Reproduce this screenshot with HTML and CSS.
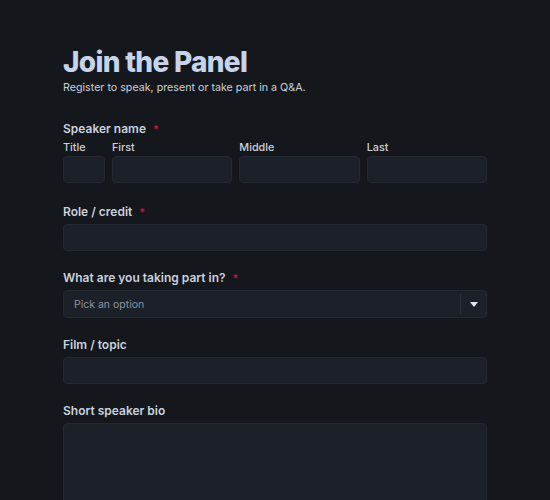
FILE: index.html
```html
<!DOCTYPE html>
<html lang="en">
<head>
<meta charset="utf-8">
<title>Join the Panel</title>
<link rel="stylesheet" href="styles.css">
</head>
<body>
<main class="page">
  <h1 class="title">Join the Panel</h1>
  <p class="subtitle">Register to speak, present or take part in a Q&amp;A.</p>

  <form class="form">
    <div class="field field-name">
      <div class="label">Speaker name <span class="req">*</span></div>
      <div class="name-grid">
        <label class="sub"><span class="sub-label">Title</span><input class="input" type="text"></label>
        <label class="sub"><span class="sub-label">First</span><input class="input" type="text"></label>
        <label class="sub"><span class="sub-label">Middle</span><input class="input" type="text"></label>
        <label class="sub"><span class="sub-label">Last</span><input class="input" type="text"></label>
      </div>
    </div>

    <div class="field">
      <label class="label">Role / credit <span class="req">*</span></label>
      <input class="input" type="text">
    </div>

    <div class="field">
      <label class="label">What are you taking part in? <span class="req">*</span></label>
      <div class="select">
        <span class="placeholder">Pick an option</span>
        <span class="select-btn"><span class="caret"></span></span>
      </div>
    </div>

    <div class="field">
      <label class="label">Film / topic</label>
      <input class="input" type="text">
    </div>

    <div class="field">
      <label class="label">Short speaker bio</label>
      <textarea class="input textarea"></textarea>
    </div>
  </form>
</main>
</body>
</html>
```

FILE: styles.css
```css
* { box-sizing: border-box; }
html, body {
  margin: 0;
  background: #14171c;
  font-family: Inter, "Noto Sans", sans-serif;
  color: #c9d1dc;
}
.page {
  width: 424px;
  margin: 0 auto;
  padding-top: 45px;
}
.title {
  margin: 0;
  font-size: 28px;
  line-height: 34px;
  font-weight: 800;
  letter-spacing: -0.025em;
  color: #c5d4ea;
}
.subtitle {
  margin: 1px 0 0;
  font-size: 10.7px;
  line-height: 16px;
  color: #c8d0db;
}
.form {
  margin-top: 25px;
  display: flex;
  flex-direction: column;
  gap: 19px;
}
.field {
  display: flex;
  flex-direction: column;
}
.field-name {
  margin-bottom: 2px;
}
.label {
  display: block;
  font-size: 12px;
  line-height: 16px;
  font-weight: 600;
  color: #c9d1dc;
  margin-bottom: 4px;
}
.req {
  color: #c0154d;
  font-size: 11px;
  margin-left: 4px;
}
.name-grid {
  display: grid;
  grid-template-columns: 42px 1fr 1fr 1fr;
  column-gap: 7px;
}
.sub {
  display: flex;
  flex-direction: column;
}
.sub-label {
  font-size: 10.8px;
  line-height: 13px;
  font-weight: 500;
  color: #c9d1dc;
  margin-bottom: 2px;
}
.input {
  display: block;
  width: 100%;
  height: 27px;
  margin: 0;
  background: #1b2029;
  border: 1px solid #232932;
  border-radius: 4px;
  color: #c9d1dc;
  font: inherit;
  font-size: 11px;
  padding: 0 10px;
  outline: none;
}
.textarea {
  height: 100px;
  resize: none;
}
.select {
  display: flex;
  align-items: center;
  height: 28px;
  background: #1b2029;
  border: 1px solid #232932;
  border-radius: 4px;
}
.placeholder {
  flex: 1;
  padding-left: 10px;
  font-size: 10.5px;
  color: #8b95a3;
}
.select-btn {
  width: 26px;
  height: 20px;
  border-left: 1px solid #2a313b;
  display: flex;
  align-items: center;
  justify-content: center;
}
.caret {
  width: 0;
  height: 0;
  border-left: 4.5px solid transparent;
  border-right: 4.5px solid transparent;
  border-top: 5px solid #dde6f2;
}
```
